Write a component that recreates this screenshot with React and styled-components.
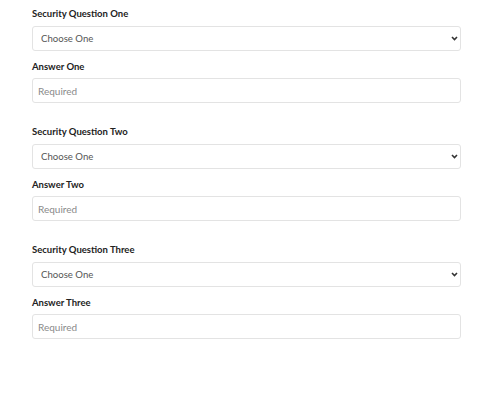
import React from "react";
import styled, { createGlobalStyle } from "styled-components";

const Global = createGlobalStyle`
  html, body { margin: 0; padding: 0; background: #ffffff; }
  body { font-family: "Lato", "Liberation Sans", sans-serif; }
`;

const Form = styled.form`
  width: 429px;
  padding: 7px 0 0 32px;
  display: flex;
  flex-direction: column;
`;

const Section = styled.div`
  display: flex;
  flex-direction: column;
  height: 118px;
`;

const Label = styled.label`
  display: block;
  font-size: 9.5px;
  line-height: 14px;
  font-weight: 700;
  color: #222;
  margin: ${(p) => (p.$answer ? "9px 0 4px" : "0 0 5px")};
`;

const SelectWrap = styled.div`
  position: relative;
  height: 25px;
`;

const Select = styled.select`
  box-sizing: border-box;
  appearance: none;
  -webkit-appearance: none;
  width: 100%;
  height: 25px;
  margin: 0;
  padding: 0 20px 0 8px;
  border: 1px solid #e3e3e3;
  border-radius: 3px;
  background: #fff;
  font-family: inherit;
  font-size: 9.6px;
  color: #555;
  outline: none;
`;

const Chevron = styled.svg`
  position: absolute;
  right: 3px;
  top: 10px;
  width: 7px;
  height: 5px;
  pointer-events: none;
`;

const Input = styled.input`
  box-sizing: border-box;
  width: 100%;
  height: 25px;
  margin: 0;
  padding: 0 5px;
  border: 1px solid #e3e3e3;
  border-radius: 3px;
  font-family: inherit;
  font-size: 10px;
  color: #333;
  outline: none;
  &::placeholder { color: #8a8a8a; }
`;

const items = [
  ["Security Question One", "Answer One"],
  ["Security Question Two", "Answer Two"],
  ["Security Question Three", "Answer Three"],
];

export default function App() {
  return (
    <>
      <Global />
      <Form>
        {items.map(([q, a]) => (
          <Section key={q}>
            <Label>{q}</Label>
            <SelectWrap>
              <Select defaultValue="">
                <option value="">Choose One</option>
              </Select>
              <Chevron viewBox="0 0 7 5">
                <path d="M1 1 L3.5 3.5 L6 1" fill="none" stroke="#333" strokeWidth="1.6" />
              </Chevron>
            </SelectWrap>
            <Label $answer>{a}</Label>
            <Input placeholder="Required" />
          </Section>
        ))}
      </Form>
    </>
  );
}
